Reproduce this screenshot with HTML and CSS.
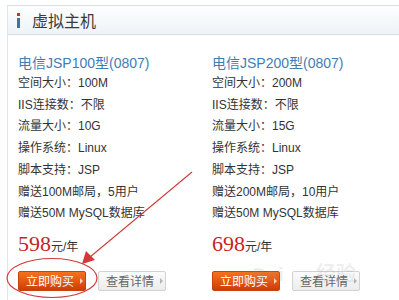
FILE: index.html
```html
<!DOCTYPE html>
<html lang="zh-CN">
<head>
    <meta charset="UTF-8">
    <title>虚拟主机</title>
    <link rel="stylesheet" href="styles.css">
</head>
<body>
    <div class="panel">
        <div class="panel-head">
            <span class="head-icon"><i class="dot"></i><i class="bar"></i></span>
            <h2>虚拟主机</h2>
        </div>

        <div class="plans">
            <div class="plan">
                <h3>电信JSP100型(0807)</h3>
                <ul class="specs">
                    <li>空间大小：100M</li>
                    <li>IIS连接数：不限</li>
                    <li>流量大小：10G</li>
                    <li>操作系统：Linux</li>
                    <li>脚本支持：JSP</li>
                    <li>赠送100M邮局，5用户</li>
                    <li>赠送50M MySQL数据库</li>
                </ul>
                <div class="price"><em>598</em>元/年</div>
                <div class="actions">
                    <a class="btn btn-buy">立即购买<b></b></a>
                    <a class="btn btn-info">查看详情<b></b></a>
                </div>
            </div>

            <div class="plan">
                <h3>电信JSP200型(0807)</h3>
                <ul class="specs">
                    <li>空间大小：200M</li>
                    <li>IIS连接数：不限</li>
                    <li>流量大小：15G</li>
                    <li>操作系统：Linux</li>
                    <li>脚本支持：JSP</li>
                    <li>赠送200M邮局，10用户</li>
                    <li>赠送50M MySQL数据库</li>
                </ul>
                <div class="price"><em>698</em>元/年</div>
                <div class="actions">
                    <a class="btn btn-buy">立即购买<b></b></a>
                    <a class="btn btn-info">查看详情<b></b></a>
                </div>
            </div>
        </div>
    </div>

    <!-- annotation drawn over the screenshot -->
    <svg class="markup" width="399" height="300" viewBox="0 0 399 300">
        <ellipse cx="52" cy="278" rx="45" ry="19.5" fill="none" stroke="#d23a3a" stroke-width="1.2"/>
        <line x1="192" y1="172" x2="90" y2="257" stroke="#d23a3a" stroke-width="1.1"/>
        <polygon points="82,264 86,251 95,260" fill="#d23a3a"/>
    </svg>

    <div class="watermark">Bai<span>经验</span></div>
</body>
</html>
```

FILE: styles.css
```css
* {
    margin: 0;
    padding: 0;
    box-sizing: border-box;
}

body {
    font-family: 'Liberation Sans', 'Noto Sans CJK SC', sans-serif;
    font-size: 12px;
    color: #333;
    background: #fff;
    position: relative;
    width: 399px;
    height: 300px;
    overflow: hidden;
}

.panel {
    margin: 5px 0 0 7px;
    border-top: 1px solid #dcdfe2;
    border-left: 1px solid #e2e6ea;
    height: 295px;
}

.panel-head {
    height: 29px;
    display: flex;
    align-items: center;
    padding-left: 9px;
    border-bottom: 1px solid #d6dde4;
    background: linear-gradient(#fdfefe 0%, #eef3f8 100%);
}

.head-icon {
    display: flex;
    flex-direction: column;
    gap: 2px;
    margin-top: 1px;
}

.head-icon i {
    display: block;
    width: 3px;
}

.head-icon .dot {
    height: 3px;
    background: #a8402e;
}

.head-icon .bar {
    height: 10px;
    background: #41729c;
}

.panel-head h2 {
    font-size: 16px;
    font-weight: normal;
    color: #3a3a3a;
    margin-left: 12px;
}

.plans {
    display: grid;
    grid-template-columns: 194px 1fr;
    padding: 18px 0 0 10px;
}

.plan h3 {
    font-size: 14px;
    font-weight: normal;
    line-height: 20px;
    color: #3f7db5;
}

.specs {
    list-style: none;
}

.specs li {
    line-height: 21.7px;
    white-space: nowrap;
}

.price {
    margin-top: 6px;
    line-height: 26px;
}

.price em {
    font-family: 'Liberation Serif', serif;
    font-style: normal;
    font-size: 22px;
    color: #c91f1f;
}

.actions {
    display: flex;
    gap: 12px;
    margin-top: 11px;
}

.btn {
    display: flex;
    align-items: center;
    width: 68px;
    height: 20px;
    padding-left: 7px;
    border-radius: 2px;
    font-size: 12px;
}

.btn b {
    margin-left: 6px;
    border-style: solid;
    border-width: 3px 0 3px 3px;
    border-color: transparent;
}

.btn-buy {
    color: #fff;
    background: linear-gradient(#f3721f 0%, #e3550f 55%, #cc3d08 100%);
    border: 1px solid #c8420c;
}

.btn-buy b {
    border-left-color: #fbd4bd;
}

.btn-info {
    color: #666;
    background: linear-gradient(#fbfbfb 0%, #ececec 100%);
    border: 1px solid #d2d2d2;
}

.btn-info b {
    border-left-color: #b5b5b5;
}

.markup {
    position: absolute;
    left: 0;
    top: 0;
    pointer-events: none;
}

.watermark {
    position: absolute;
    left: 252px;
    top: 258px;
    font-family: 'DejaVu Sans', 'Noto Sans CJK SC', sans-serif;
    font-size: 18px;
    font-weight: bold;
    color: rgba(150, 150, 150, 0.16);
    pointer-events: none;
}

.watermark span {
    margin-left: 32px;
    font-size: 20px;
}
```
